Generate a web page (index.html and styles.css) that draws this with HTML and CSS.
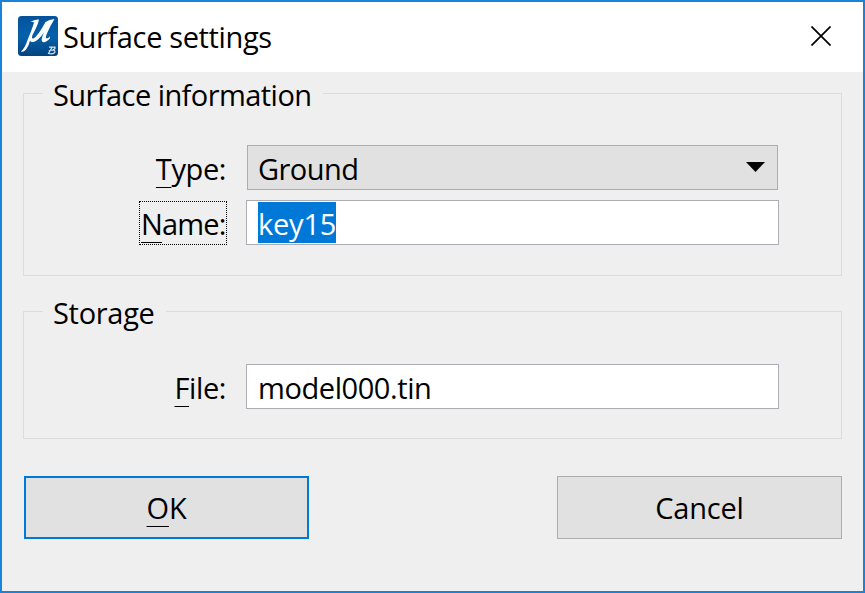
FILE: index.html
```html
<!DOCTYPE html>
<html lang="en">
<head>
<meta charset="utf-8">
<title>Surface settings</title>
<link rel="stylesheet" href="styles.css">
</head>
<body>
<main class="window">
  <header class="titlebar">
    <svg class="logo" viewBox="0 0 40 40" aria-hidden="true">
      <defs>
        <linearGradient id="blue" x1="0" y1="0" x2="0" y2="1">
          <stop offset="0" stop-color="#05529a"/>
          <stop offset=".5" stop-color="#0561ab"/>
          <stop offset="1" stop-color="#034380"/>
        </linearGradient>
      </defs>
      <rect width="40" height="40" rx="3.5" fill="url(#blue)"/>
      <path fill="#fff" d="M12 6 Q17 3 21 3.500 Q20 9 14.500 19 Q13 23 15.500 22.500 Q20 20 27.500 6 Q31 3.500 36.500 3 Q32 10 28.500 18.500 Q27 22.500 29 22.500 Q30.500 22 32 20.500 L31.800 22.500 Q28 26.500 25.500 26.300 Q22.500 26 24.500 20 L26 16.500 Q20 25 15.500 26 Q12.500 26.500 12 24.500 Q10.500 31 7 34.500 Q4.500 36.500 3 35.500 Q7 32 9.500 24 Q14.500 12 16 6.500 Q15 5.500 12 6Z"/>
      <path fill="none" stroke="#d8e5f0" stroke-width="1.200" d="M31 31.200 H37 Q37.500 33.200 34.500 34 Q38 34.500 36.500 36.800 Q34 38.600 30.500 37.500 L34 31.500 M30.800 34.500 L35 34"/>
    </svg>
    <h1 class="title">Surface settings</h1>
    <button class="close" aria-label="Close">
      <svg viewBox="0 0 20 20" width="20" height="20"><path d="M.5.500 19.500 19.500M19.500.500.5 19.500" stroke="#000" stroke-width="1.700"/></svg>
    </button>
  </header>

  <form class="content">
    <section class="group information">
      <h2 class="legend legend-info"><span>Surface information</span></h2>
      <div class="row">
        <div class="label type"><span class="key">T</span>ype:</div>
        <div class="field combo"><span class="ground">Ground</span>
          <svg class="arrow" viewBox="0 0 19 10"><path d="M0 0H19L9.500 10Z"/></svg>
        </div>
      </div>
      <div class="row">
        <div class="label name"><span class="key">N</span>ame:</div>
        <div class="field input"><span class="selected">key15</span></div>
      </div>
    </section>

    <section class="group storage">
      <h2 class="legend legend-storage"><span>Storage</span></h2>
      <div class="row">
        <div class="label file"><span class="key">F</span>ile:</div>
        <div class="field input"><span class="filename">model000.tin</span></div>
      </div>
    </section>

    <footer class="actions">
      <button type="button" class="button primary"><span class="ok"><span class="key">O</span>K</span></button>
      <button type="button" class="button"><span class="cancel">Cancel</span></button>
    </footer>
  </form>
</main>
</body>
</html>
```
FILE: styles.css
```css
* { box-sizing: border-box; }

body {
  margin: 0;
  color: #000;
  font: 400 29px/40px "Open Sans", "Noto Sans", sans-serif;
}

.window {
  width: 865px;
  height: 593px;
  border: 2px solid #1a82d9;
  background: #efefef;
  overflow: hidden;
}

.titlebar {
  display: flex;
  align-items: center;
  height: 70px;
  padding: 0 32px 2px 16px;
  background: #fff;
}

.logo { width: 40px; height: 40px; }

.title {
  margin: 2px 0 0 5px;
  font: inherit;
  letter-spacing: -.36px;
  white-space: nowrap;
}

.close {
  display: flex;
  margin-left: auto;
  padding: 0;
  border: 0;
  background: none;
}

.content { padding: 21px 21px 0; }

.group {
  border: 1px solid #dcdcdc;
}

.information { height: 183px; }
.storage { height: 128px; margin-top: 35px; }

.legend {
  height: 40px;
  margin: -19px 0 0 19px;
  padding-left: 10px;
  background: #efefef;
  font: inherit;
  white-space: nowrap;
}

.legend-info { width: 280px; margin-bottom: 30px; letter-spacing: -.56px; }
.legend-storage { width: 123px; margin-bottom: 31px; letter-spacing: -.3px; }

.row {
  display: grid;
  grid-template-columns: 203px 533px;
  column-gap: 19px;
  height: 45px;
  margin-bottom: 10px;
}

.label {
  justify-self: end;
  height: 44px;
  margin-top: 1px;
  padding: 3px 1px 0;
  line-height: 40px;
  letter-spacing: -.4px;
  white-space: nowrap;
}

.name {
  width: 88px;
  border: 1px dotted #000;
  padding: 2px 0 0 1px;
  letter-spacing: -.85px;
}

.key {
  text-decoration: underline 1px;
  text-underline-offset: 7px;
  text-decoration-skip-ink: none;
}

.field {
  display: flex;
  height: 45px;
  padding: 1px 11px;
  border: 1px solid #abadb3;
  background: #fff;
  line-height: 43px;
}

.combo {
  align-items: center;
  justify-content: space-between;
  margin: 0 1px;
  padding: 2px 12px 0 10px;
  border-color: #adadad;
  background: #e1e1e1;
}

.ground { letter-spacing: -.55px; }
.filename { letter-spacing: -.42px; }

.arrow { width: 19px; height: 10px; margin-bottom: 3px; }

.selected {
  height: 41px;
  background: #0078d7;
  color: #fff;
  letter-spacing: -.2px;
}

.actions {
  display: flex;
  justify-content: space-between;
  margin-top: 37px;
  padding-left: 1px;
}

.button {
  width: 285px;
  height: 63px;
  padding: 1px 0 0;
  border: 1px solid #adadad;
  background: #e1e1e1;
  color: #000;
  font: inherit;
  letter-spacing: -.2px;
}

.primary { border: 2px solid #0078d7; }
```
